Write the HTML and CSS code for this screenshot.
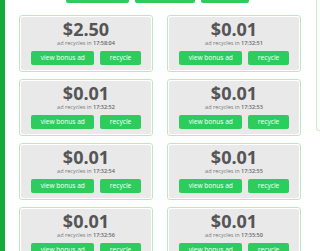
FILE: index.html
```html
<!DOCTYPE html>
<html>
<head>
<meta charset="utf-8">
<link rel="stylesheet" href="styles.css">
</head>
<body>
<div class="page">
  <div class="rail"></div>
  <div class="main">
    <div class="topbar">
      <div class="tb tb1"></div>
      <div class="tb tb2"></div>
      <div class="tb tb3"></div>
    </div>
    <div class="grid">
      <div class="card"><div class="inner">
        <div class="amount">$2.50</div>
        <div class="note">ad recycles in <b>17:58:04</b></div>
        <div class="btns"><span class="btn">view bonus ad</span><span class="btn">recycle</span></div>
      </div></div>
      <div class="card"><div class="inner">
        <div class="amount">$0.01</div>
        <div class="note">ad recycles in <b>17:32:51</b></div>
        <div class="btns"><span class="btn">view bonus ad</span><span class="btn">recycle</span></div>
      </div></div>
      <div class="card"><div class="inner">
        <div class="amount">$0.01</div>
        <div class="note">ad recycles in <b>17:32:52</b></div>
        <div class="btns"><span class="btn">view bonus ad</span><span class="btn">recycle</span></div>
      </div></div>
      <div class="card"><div class="inner">
        <div class="amount">$0.01</div>
        <div class="note">ad recycles in <b>17:32:53</b></div>
        <div class="btns"><span class="btn">view bonus ad</span><span class="btn">recycle</span></div>
      </div></div>
      <div class="card"><div class="inner">
        <div class="amount">$0.01</div>
        <div class="note">ad recycles in <b>17:32:54</b></div>
        <div class="btns"><span class="btn">view bonus ad</span><span class="btn">recycle</span></div>
      </div></div>
      <div class="card"><div class="inner">
        <div class="amount">$0.01</div>
        <div class="note">ad recycles in <b>17:32:55</b></div>
        <div class="btns"><span class="btn">view bonus ad</span><span class="btn">recycle</span></div>
      </div></div>
      <div class="card"><div class="inner">
        <div class="amount">$0.01</div>
        <div class="note">ad recycles in <b>17:32:56</b></div>
        <div class="btns"><span class="btn">view bonus ad</span><span class="btn">recycle</span></div>
      </div></div>
      <div class="card"><div class="inner">
        <div class="amount">$0.01</div>
        <div class="note">ad recycles in <b>17:35:50</b></div>
        <div class="btns"><span class="btn">view bonus ad</span><span class="btn">recycle</span></div>
      </div></div>
    </div>
  </div>
  <div class="panel"></div>
</div>
</body>
</html>
```
FILE: styles.css
```css
html, body {
  margin: 0;
  padding: 0;
  background: #fff;
}
body {
  font-family: "Open Sans", "Liberation Sans", sans-serif;
}
.page {
  display: flex;
  align-items: flex-start;
  width: 320px;
  height: 251px;
  overflow: hidden;
}
.rail {
  width: 5px;
  height: 251px;
  flex: none;
  background: #17a93b;
}
.main {
  width: 311px;
  flex: none;
  padding-left: 14px;
  box-sizing: border-box;
}
.topbar {
  display: flex;
  gap: 6px;
  margin-left: 47px;
  height: 3px;
}
.tb {
  height: 3px;
  background: #2dcc5c;
  border-radius: 0 0 2px 2px;
}
.tb1 { width: 63px; }
.tb2 { width: 60px; }
.tb3 { width: 48px; }
.grid {
  margin-top: 12px;
  display: grid;
  grid-template-columns: 134px 134px;
  column-gap: 14px;
  row-gap: 7px;
}
.card {
  height: 57px;
  box-sizing: border-box;
  border: 1px solid #b6ebc2;
  border-radius: 3px;
  padding: 1px;
  background: #fff;
}
.inner {
  height: 53px;
  background: #e9e9e9;
  border-radius: 2px;
  padding-top: 2px;
  box-sizing: border-box;
  text-align: center;
}
.amount {
  font-size: 18px;
  line-height: 20px;
  font-weight: 700;
  color: #555;
}
.note {
  font-size: 5.5px;
  line-height: 8px;
  color: #777;
}
.note b {
  font-weight: 600;
  color: #666;
}
.btns {
  margin-top: 4px;
  display: flex;
  justify-content: center;
  gap: 6px;
}
.btn {
  height: 14px;
  padding: 0 9.5px;
  background: #2dcc5c;
  border-radius: 2px;
  color: #fff;
  font-size: 6.6px;
  line-height: 14px;
}
.panel {
  margin-left: 0;
  width: 4px;
  height: 131px;
  flex: none;
  box-sizing: border-box;
  border-left: 1px solid #c3eecd;
  border-bottom: 1px solid #c3eecd;
  border-bottom-left-radius: 3px;
}
```
